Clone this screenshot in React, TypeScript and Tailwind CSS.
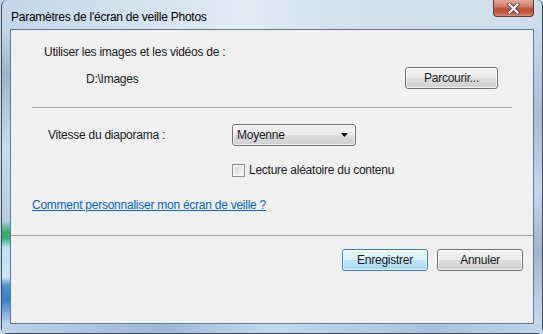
import React from "react";

const font = { fontFamily: '"Liberation Sans", Arial, sans-serif' };

function VistaButton({ label, primary, className }: { label: string; primary?: boolean; className?: string }) {
    const skin = primary
        ? "border-[#3c7fb1] bg-[linear-gradient(to_bottom,#eaf6fd_0%,#d9f0fc_50%,#bee6fd_50%,#a7d9f5_100%)]"
        : "border-[#707070] bg-[linear-gradient(to_bottom,#f2f2f2_0%,#ebebeb_50%,#dddddd_50%,#cfcfcf_100%)]";
    return (
        <div className={`h-[22px] rounded-[3px] border ${skin} ${className ?? ""}`}>
            <div className="h-full w-full rounded-[2px] border border-white/70 flex items-center justify-center text-[12px] text-[#1a1a1a]">
                {label}
            </div>
        </div>
    );
}

export default function App() {
    return (
        <div style={font} className="w-[543px] h-[334px] bg-[#c9d9e8] overflow-hidden tracking-[-0.25px]">
            <div className="w-[542px] h-[334px] ml-[1px] flex flex-col rounded-t-[6px] border-x border-b border-[#3b4b5c] rounded-b-[6px] bg-[linear-gradient(to_right,#c3d7ea_0%,#d6e4f1_30%,#e4edf6_45%,#d3e1ee_60%,#cfdeed_100%)]">
                {/* title bar */}
                <div className="h-[29px] flex items-start pl-[9px] pr-[8px]">
                    <span className="mt-[8px] text-[12px] text-black">Paramètres de l'écran de veille Photos</span>
                    <div className="ml-auto w-[41px] h-[17px] rounded-b-[4px] border border-t-0 border-[#5b3b36] bg-[linear-gradient(to_bottom,#e0a896_0%,#d07c66_40%,#bc4f37_55%,#c45a40_80%,#dc8c72_100%)] flex items-center justify-center">
                        <svg width="13" height="11" viewBox="0 0 13 11">
                            <path d="M2.5 1.5 L10.5 9.5 M10.5 1.5 L2.5 9.5" stroke="#5a4a48" strokeWidth="4" strokeLinecap="square" />
                            <path d="M2.5 1.5 L10.5 9.5 M10.5 1.5 L2.5 9.5" stroke="#f4f4f4" strokeWidth="2.2" strokeLinecap="square" />
                        </svg>
                    </div>
                </div>
                {/* middle */}
                <div className="flex flex-1">
                    <div className="w-[8px] bg-[linear-gradient(to_bottom,#c4d6e7_0%,#9fb4c6_15%,#c9dbeb_40%,#b8ccdd_65%,#2fae6e_69%,#36b07a_71%,#bfe0f2_74%,#cde6f5_84%,#4a8fd0_87%,#3a7fcf_92%,#bcd7ee_100%)]" />
                    <div className="flex-1 bg-[#f0f0f0] border border-[#66788a] flex flex-col text-[12px] text-[#1a1a1a]">
                        <div className="mt-[14px] pl-[33px] h-[16px] leading-[16px]">Utiliser les images et les vidéos de :</div>
                        <div className="mt-[7px] flex items-center h-[21px]">
                            <span className="pl-[75px] pt-[2px]">D:\Images</span>
                            <VistaButton label="Parcourir..." className="ml-auto mr-[35px] w-[93px] h-[21px]" />
                        </div>
                        <div className="mt-[19px] mx-[21px] border-t border-[#a0a0a0] border-b border-b-white" />
                        <div className="mt-[15px] flex items-center h-[22px]">
                            <span className="pl-[37px] w-[221px]">Vitesse du diaporama :</span>
                            <div className="w-[124px] h-[22px] rounded-[3px] border border-[#707070] bg-[linear-gradient(to_bottom,#f2f2f2_0%,#ebebeb_50%,#dddddd_50%,#cfcfcf_100%)]">
                                <div className="h-full rounded-[2px] border border-white/70 flex items-center pl-[3px] pr-[5px]">
                                    <span>Moyenne</span>
                                    <svg className="ml-auto" width="8" height="4" viewBox="0 0 8 4">
                                        <path d="M0 0 H7 L3.5 4 Z" fill="#000" />
                                    </svg>
                                </div>
                            </div>
                        </div>
                        <div className="mt-[17px] flex items-center h-[14px] pl-[221px]">
                            <div className="w-[13px] h-[13px] border border-[#8e8f8f] bg-[#f4f4f4]">
                                <div className="m-[2px] w-[7px] h-[7px] bg-[linear-gradient(135deg,#cbcfd5_0%,#e6e8eb_60%,#f6f6f6_100%)]" />
                            </div>
                            <span className="ml-[4px]">Lecture aléatoire du contenu</span>
                        </div>
                        <div className="mt-[20px] pl-[21px] h-[16px] leading-[16px]">
                            <span className="text-[#0066cc] underline">Comment personnaliser mon écran de veille ?</span>
                        </div>
                        <div className="mt-[22px] border-t border-[#a0a0a0]" />
                        <div className="mt-[13px] flex justify-end gap-[9px] pr-[10px]">
                            <VistaButton label="Enregistrer" primary className="w-[86px]" />
                            <VistaButton label="Annuler" className="w-[86px]" />
                        </div>
                    </div>
                    <div className="w-[8px] bg-[linear-gradient(to_bottom,#c9dbeb_0%,#a6bdd2_30%,#c3d7e9_55%,#9cb6cf_75%,#c7daea_100%)]" />
                </div>
                <div className="h-[9px] bg-[linear-gradient(to_right,#bcd3e8_0%,#9fb9d3_30%,#c5d9ec_50%,#a9c1d9_80%,#c0d5e9_100%)]" />
            </div>
        </div>
    );
}
